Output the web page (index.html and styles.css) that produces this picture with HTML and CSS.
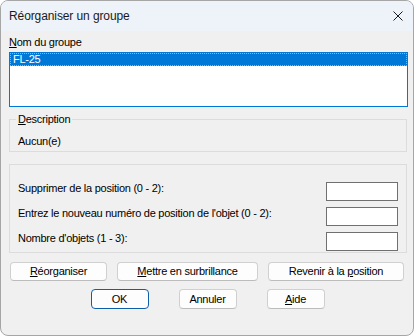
FILE: index.html
```html
<!DOCTYPE html>
<html lang="fr">
<head>
<meta charset="utf-8">
<title>Réorganiser un groupe</title>
<link rel="stylesheet" href="styles.css">
</head>
<body>
<div class="window">
  <div class="titlebar">
    <span class="title">Réorganiser un groupe</span>
    <svg class="close" width="10" height="10" viewBox="0 0 10 10"><path d="M0.5 0.5 L9.5 9.5 M9.5 0.5 L0.5 9.5" stroke="#1b1b1b" stroke-width="1" fill="none"/></svg>
  </div>
  <div class="content">
    <div class="label"><u>N</u>om du groupe</div>
    <div class="listbox">
      <div class="item selected">FL-25</div>
    </div>
    <fieldset class="group">
      <legend><u>D</u>escription</legend>
      <div class="desc">Aucun(e)</div>
    </fieldset>
    <div class="group2">
      <div class="row"><span>Supprimer de la position (0 - 2):</span><span class="input"></span></div>
      <div class="row"><span>Entrez le nouveau numéro de position de l'objet (0 - 2):</span><span class="input"></span></div>
      <div class="row"><span>Nombre d'objets (1 - 3):</span><span class="input"></span></div>
    </div>
    <div class="buttons1">
      <button class="btn w1"><u>R</u>éorganiser</button>
      <button class="btn w2"><u>M</u>ettre en surbrillance</button>
      <button class="btn w3">Revenir à la <u>p</u>osition</button>
    </div>
    <div class="buttons2">
      <button class="btn small default">OK</button>
      <button class="btn small">Annuler</button>
      <button class="btn small"><u>A</u>ide</button>
    </div>
  </div>
</div>
</body>
</html>
```
FILE: styles.css
```css
html, body {
  margin: 0;
  padding: 0;
  background: #ffffff;
}
body {
  font-family: "Liberation Sans", Arial, sans-serif;
  font-size: 11px;
  line-height: 13px;
  letter-spacing: -0.25px;
  color: #000;
}
.window {
  width: 414px;
  height: 336px;
  box-sizing: border-box;
  border: 1px solid #a6a6a6;
  border-radius: 8px;
  background: #f0f0f0;
  overflow: hidden;
}
.titlebar {
  height: 30px;
  background: #eef3f9;
  display: flex;
  align-items: center;
  justify-content: space-between;
  padding: 0 10px 0 8px;
}
.title {
  font-size: 12px;
  line-height: 14px;
  letter-spacing: -0.1px;
  color: #1a1a1a;
}
.close {
  display: block;
}
.content {
  padding: 5px 0 0 8px;
}
.label {
  height: 13px;
}
.listbox {
  margin-top: 3px;
  width: 399px;
  height: 55px;
  box-sizing: border-box;
  border: 1px solid #0078d7;
  background: #fff;
}
.item {
  height: 13px;
  padding-left: 3px;
}
.item.selected {
  background: #0078d7;
  color: #fff;
  outline: 1px dotted #f0a050;
  outline-offset: -1px;
}
.group {
  margin: 6px 0 0 0;
  padding: 0 8px 3px 6px;
  width: 398px;
  box-sizing: border-box;
  border: 1px solid #dcdcdc;
  min-inline-size: 0;
}
.group legend {
  padding: 0 2px;
  line-height: 13px;
}
.desc {
  margin-top: 9px;
  padding-left: 2px;
}
.group2 {
  margin-top: 12px;
  width: 398px;
  height: 89px;
  box-sizing: border-box;
  border: 1px solid #dcdcdc;
  padding: 17px 8px 0 8px;
  display: flex;
  flex-direction: column;
  gap: 6px;
}
.row {
  display: flex;
  justify-content: space-between;
  align-items: flex-start;
  height: 19px;
}
.input {
  width: 72px;
  height: 19px;
  box-sizing: border-box;
  border: 1px solid #707070;
  background: #fff;
}
.buttons1 {
  margin-top: 9px;
  display: flex;
  gap: 10px;
  padding-left: 1px;
}
.buttons2 {
  margin-top: 8px;
  display: flex;
  justify-content: center;
  gap: 30px;
  padding-right: 8px;
  padding-left: 1px;
}
.btn {
  font-family: "Liberation Sans", Arial, sans-serif;
  font-size: 11px;
  line-height: 13px;
  letter-spacing: -0.25px;
  color: #000;
  height: 19px;
  padding: 0;
  box-sizing: border-box;
  background: #fdfdfd;
  border: 1px solid #d0d0d0;
  border-bottom-color: #bcbcbc;
  border-radius: 4px;
}
.w1 { width: 97px; }
.w2 { width: 141px; }
.w3 { width: 136px; }
.small { width: 58px; height: 20px; }
.default {
  border: 1px solid #0f5fa8;
}
```
